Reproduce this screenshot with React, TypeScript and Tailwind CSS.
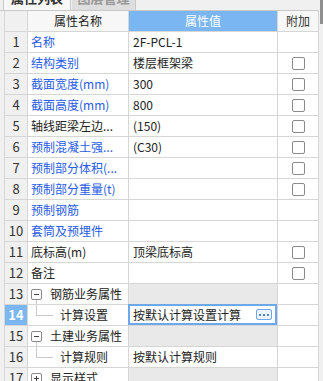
import React from 'react'

type Row = {
  no: number
  name: string
  value?: string
  blue?: boolean
  check?: boolean
  group?: 'open' | 'closed'
  child?: boolean
}

const rows: Row[] = [
  { no: 1, name: '名称', value: '2F-PCL-1', blue: true },
  { no: 2, name: '结构类别', value: '楼层框架梁', blue: true, check: true },
  { no: 3, name: '截面宽度(mm)', value: '300', blue: true, check: true },
  { no: 4, name: '截面高度(mm)', value: '800', blue: true, check: true },
  { no: 5, name: '轴线距梁左边...', value: '(150)', check: true },
  { no: 6, name: '预制混凝土强...', value: '(C30)', blue: true, check: true },
  { no: 7, name: '预制部分体积(...', blue: true, check: true },
  { no: 8, name: '预制部分重量(t)', blue: true, check: true },
  { no: 9, name: '预制钢筋', blue: true },
  { no: 10, name: '套筒及预埋件', blue: true },
  { no: 11, name: '底标高(m)', value: '顶梁底标高', check: true },
  { no: 12, name: '备注', check: true },
  { no: 13, name: '钢筋业务属性', group: 'open' },
  { no: 14, name: '计算设置', value: '按默认计算设置计算', child: true },
  { no: 15, name: '土建业务属性', group: 'open' },
  { no: 16, name: '计算规则', value: '按默认计算规则', child: true },
  { no: 17, name: '显示样式', group: 'closed' },
]

const cell = 'h-full border-r border-[#d6d6d6] flex items-center'

function TreeBox({ open }: { open: boolean }) {
  return (
    <span className="relative w-[11px] h-[11px] border border-[#8a8a8a] rounded-[2px] bg-white flex items-center justify-center shrink-0">
      <span className="absolute w-[5px] h-px bg-[#444]" />
      {!open && <span className="absolute w-px h-[5px] bg-[#444]" />}
      {open && <span className="absolute top-[10px] left-[4px] w-px h-[7px] bg-[#c8c8c8]" />}
    </span>
  )
}

function Checkbox() {
  return <span className="w-[13px] h-[13px] border border-[#8a8a8a] rounded-[2px] bg-white" />
}

export default function App() {
  return (
    <div className="w-[323px] h-[381px] overflow-hidden bg-[#f0f0f0] flex text-[12px] text-[#222]" style={{ fontFamily: '"Noto Sans CJK SC", "Microsoft YaHei", sans-serif' }}>
      <div className="w-[319px] flex flex-col">
        {/* tabs, mostly scrolled out of view */}
        <div className="h-[11px] shrink-0 border-b border-[#c8c8c8] flex items-end pl-[3px] overflow-hidden">
          <div className="w-[68px] h-[10px] bg-[#f7f7f7] border-l border-r border-[#c8c8c8] flex justify-center">
            <span className="-mt-[9px] leading-[14px] text-[13px] text-[#333] font-bold">属性列表</span>
          </div>
          <div className="w-[64px] ml-px h-[10px] bg-[#dedede] border-r border-[#c8c8c8] flex justify-center">
            <span className="-mt-[9px] leading-[14px] text-[13px] text-[#999] font-bold">图层管理</span>
          </div>
        </div>

        <div className="ml-[4px] border-l border-[#d6d6d6] flex flex-col">
          {/* header */}
          <div className="h-[21px] shrink-0 flex border-b border-[#d6d6d6] bg-[#f7f7f7]">
            <div className={`${cell} w-[23px] bg-[#f0f0f0]`} />
            <div className={`${cell} w-[101px] justify-center`}>属性名称</div>
            <div className={`${cell} w-[149px] justify-center bg-[#7ab6f2] text-white`}>属性值</div>
            <div className={`${cell} w-[41px] justify-center text-[#333]`}>附加</div>
          </div>

          {rows.map((r) => {
            const selected = r.no === 14
            return (
              <div key={r.no} className="h-[21px] shrink-0 flex border-b border-[#d6d6d6] bg-white">
                <div className={`${cell} w-[23px] justify-center text-[13px] ${selected ? 'bg-[#7ab6f2] text-white font-bold' : 'bg-[#f0f0f0] text-[#333]'}`}>
                  {r.no}
                </div>
                <div className={`${cell} w-[101px] pl-[3px] whitespace-nowrap overflow-hidden ${r.blue ? 'text-[#2a5be3]' : ''}`}>
                  {r.group && (
                    <>
                      <TreeBox open={r.group === 'open'} />
                      <span className="ml-[8px]">{r.name}</span>
                    </>
                  )}
                  {r.child && (
                    <>
                      <span className="self-start ml-[5px] w-[17px] h-[11px] border-l border-b border-[#c8c8c8]" />
                      <span className="ml-[7px]">{r.name}</span>
                    </>
                  )}
                  {!r.group && !r.child && r.name}
                </div>
                <div className={`${cell} relative w-[149px] pl-[4px] whitespace-nowrap ${r.group ? 'bg-[#e9e9e9]' : ''}`}>
                  {r.value}
                  {selected && (
                    <div className="absolute -left-px -top-px right-0 bottom-0 border-2 border-[#6ea8ec] flex items-center justify-end pr-[3px]">
                      <span className="w-[16px] h-[11px] border border-[#6ea8ec] rounded-[2px] bg-[#eef5fd] flex items-center justify-center gap-[2px]">
                        <span className="w-[2px] h-[2px] bg-[#4d86d4]" />
                        <span className="w-[2px] h-[2px] bg-[#4d86d4]" />
                        <span className="w-[2px] h-[2px] bg-[#4d86d4]" />
                      </span>
                    </div>
                  )}
                </div>
                <div className={`${cell} w-[41px] justify-center`}>{r.check && <Checkbox />}</div>
              </div>
            )
          })}
        </div>
      </div>

      {/* scrollbar */}
      <div className="w-[4px] bg-[#f0f0f0]">
        <div className="ml-px w-[3px] h-[24px] bg-[#8f8f8f]" />
      </div>
    </div>
  )
}
